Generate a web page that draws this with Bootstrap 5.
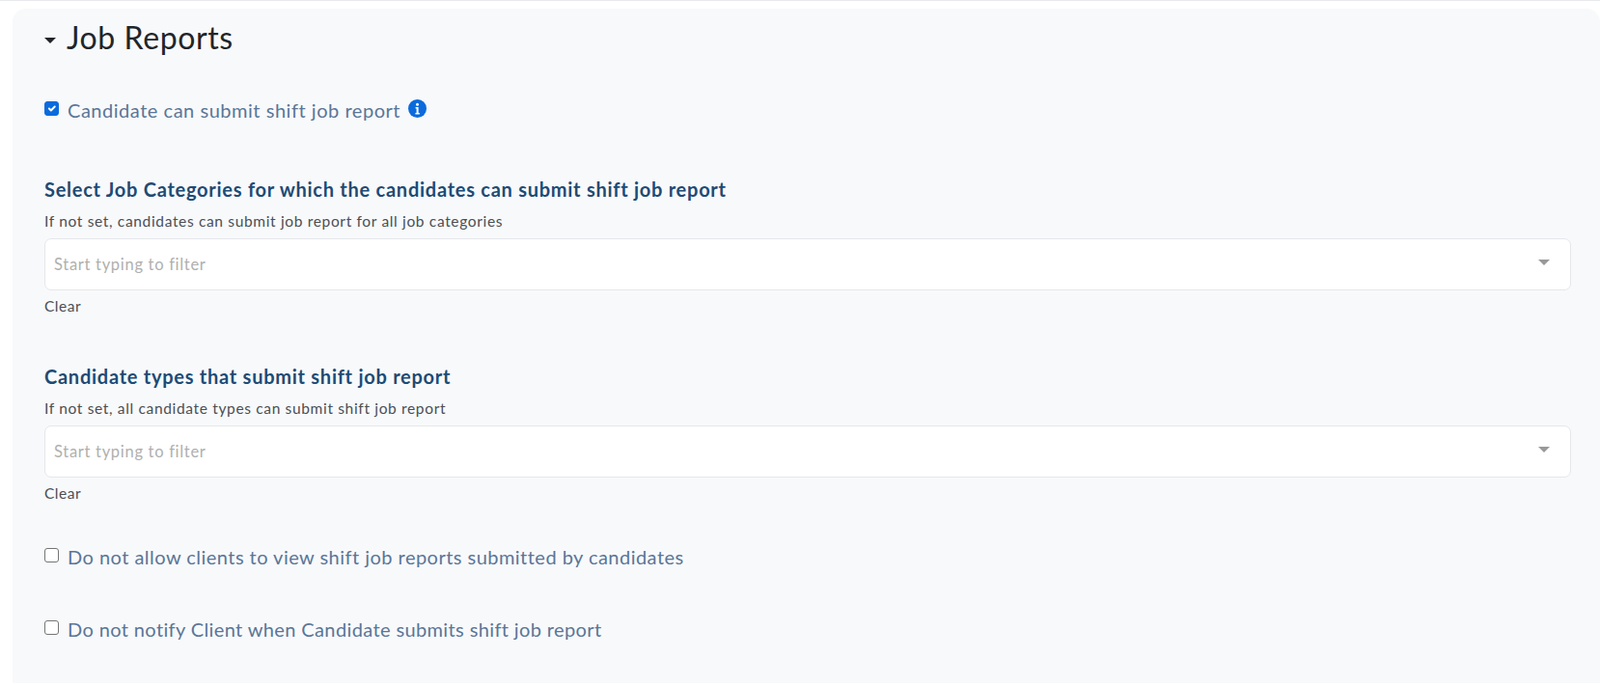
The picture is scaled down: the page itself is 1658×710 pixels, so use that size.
<!DOCTYPE html>
<html>
<head>
  <meta charset="utf-8" />
  <title>Job Reports</title>
  <link href="https://cdn.jsdelivr.net/npm/bootstrap@5.3.2/dist/css/bootstrap.min.css" rel="stylesheet">
  <style>
    html, body {
      height: 710px;
      overflow: hidden;
    }
    body {
      font-family: Lato, "Open Sans", sans-serif;
      background-color: #fff;
      border-top: 1px solid #e8e9ee;
    }
    .settings-panel {
      margin: 8px 0 0 13px;
      height: 699px;
      padding: 8px 30px 0 33px;
      background-color: #f8f9fb;
      border-radius: 14px 14px 0 0;
    }
    .panel-title {
      height: 44px;
      margin-bottom: 33px;
      font-size: 32px;
      font-weight: 400;
      letter-spacing: .6px;
      color: #212529;
      gap: 11px;
    }
    .caret-down {
      width: 0;
      height: 0;
      margin-top: 5px;
      border-left: 6px solid transparent;
      border-right: 6px solid transparent;
      border-top: 6px solid #212529;
    }
    .check-row {
      height: 40px;
      font-size: 20px;
      color: #5a7697;
    }
    .check-row .form-check-input {
      width: 15px;
      height: 15px;
      margin: 0 9px 3px 0;
      border-color: #757575;
      border-radius: 3px;
      background-color: #fff;
    }
    .check-row .form-check-input:checked {
      background-color: #0b6bdc;
      border-color: #0b6bdc;
    }
    .first-check {
      margin-bottom: 50px;
      letter-spacing: .53px;
    }
    .second-check {
      margin-top: 36px;
      letter-spacing: .47px;
    }
    .third-check {
      margin-top: 35px;
      letter-spacing: .38px;
    }
    .field-block + .field-block {
      margin-top: 51px;
    }
    .field-title {
      margin: 0 0 11px;
      font-size: 20px;
      line-height: 24px;
      font-weight: 700;
      letter-spacing: .74px;
      color: #1d4b75;
    }
    .field-help {
      margin-bottom: 8px;
      font-size: 15.5px;
      line-height: 20px;
      letter-spacing: .66px;
      color: #4a4f55;
    }
    .filter-box {
      height: 54px;
      padding: 0 21px 0 9px;
      background-color: #fff;
      border: 1px solid #e6e7ea;
      border-radius: 7px;
    }
    .filter-box .form-control {
      padding: 1px 0 0;
      font-size: 16.5px;
      letter-spacing: .7px;
      background: transparent;
    }
    .filter-box .form-control::placeholder {
      color: #b0b0ae;
      opacity: 1;
    }
    .filter-arrow {
      width: 0;
      height: 0;
      margin-bottom: 5px;
      border-left: 6px solid transparent;
      border-right: 6px solid transparent;
      border-top: 6px solid #999;
    }
    .clear-link {
      margin-top: 6px;
      font-size: 15.5px;
      line-height: 20px;
      letter-spacing: .5px;
      color: #4a4f55;
    }
  </style>
</head>
<body>
  <div class="settings-panel">
    <div class="panel-title d-flex align-items-center">
      <span class="caret-down"></span>
      <span>Job Reports</span>
    </div>

    <div class="check-row first-check d-flex align-items-center">
      <input class="form-check-input flex-shrink-0" type="checkbox" id="can-submit" checked>
      <label for="can-submit">Candidate can submit shift job report</label>
      <svg class="ms-2 mb-1" width="19" height="19" viewBox="0 0 19 19">
        <circle cx="9.5" cy="9.5" r="9.5" fill="#0b6bdc"/>
        <circle cx="9.5" cy="5.2" r="1.5" fill="#fff"/>
        <path d="M7.6 8h3v6h1.2v1.4H7.4V14h1.2V9.4h-1z" fill="#fff"/>
      </svg>
    </div>

    <!-- Job categories -->
    <div class="field-block">
      <h5 class="field-title">Select Job Categories for which the candidates can submit shift job report</h5>
      <div class="field-help">If not set, candidates can submit job report for all job categories</div>
      <div class="filter-box d-flex align-items-center">
        <input class="form-control border-0 shadow-none" type="text" placeholder="Start typing to filter">
        <span class="filter-arrow"></span>
      </div>
      <div class="clear-link">Clear</div>
    </div>

    <!-- Candidate types -->
    <div class="field-block">
      <h5 class="field-title">Candidate types that submit shift job report</h5>
      <div class="field-help">If not set, all candidate types can submit shift job report</div>
      <div class="filter-box d-flex align-items-center">
        <input class="form-control border-0 shadow-none" type="text" placeholder="Start typing to filter">
        <span class="filter-arrow"></span>
      </div>
      <div class="clear-link">Clear</div>
    </div>

    <div class="check-row second-check d-flex align-items-center">
      <input class="form-check-input flex-shrink-0" type="checkbox" id="no-view">
      <label for="no-view">Do not allow clients to view shift job reports submitted by candidates</label>
    </div>
    <div class="check-row third-check d-flex align-items-center">
      <input class="form-check-input flex-shrink-0" type="checkbox" id="no-notify">
      <label for="no-notify">Do not notify Client when Candidate submits shift job report</label>
    </div>
  </div>

  <script src="https://cdn.jsdelivr.net/npm/bootstrap@5.3.2/dist/js/bootstrap.bundle.min.js"></script>
</body>
</html>
